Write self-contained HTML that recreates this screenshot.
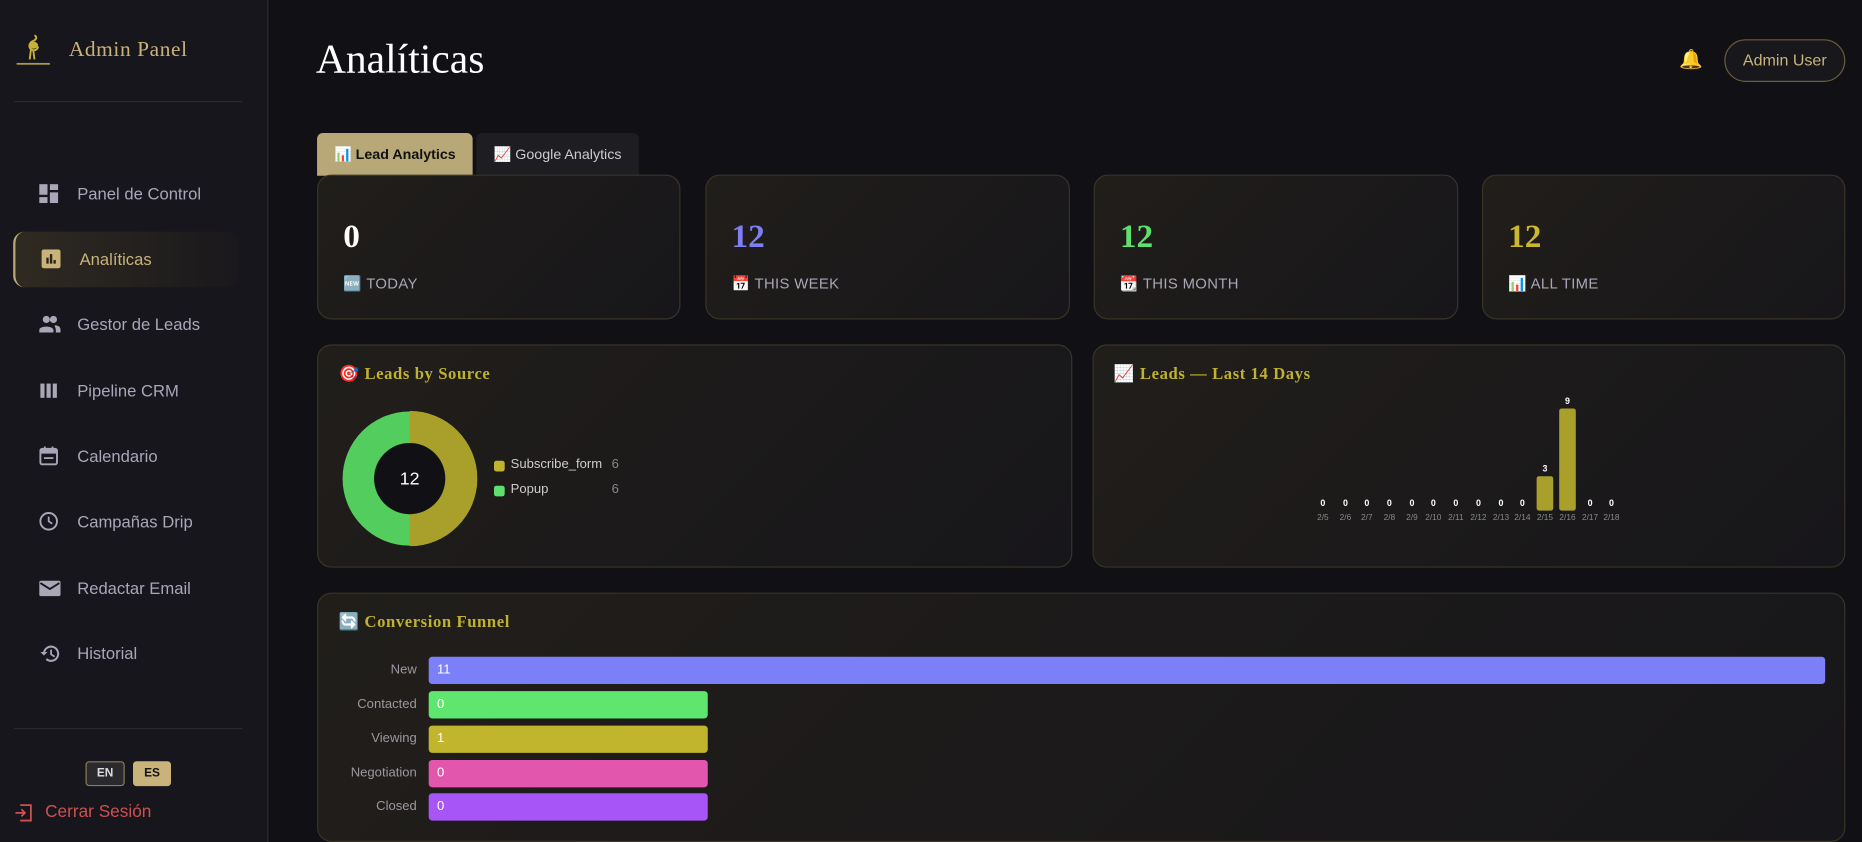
<!DOCTYPE html>
<html><head><meta charset="utf-8"><style>
*{box-sizing:border-box;margin:0;padding:0}
html,body{width:1862px;height:842px;overflow:hidden;background:#111015}
#w{position:absolute;left:0;top:0;width:1568px;height:709px;transform:scale(1.1875);transform-origin:0 0;font-family:"Liberation Sans",sans-serif;background:#111015}
.abs{position:absolute}
.side{left:0;top:0;width:226px;height:709px;background:#17161c;border-right:1px solid #2a2930}
.nav{position:absolute;left:33px;font-size:14px;color:#a9a6b8;height:20px;line-height:20px;width:190px}
.nav svg{position:absolute;left:0;top:2px}
.nav span{position:absolute;left:32px}
.card{position:absolute;border:1px solid #3a3427;border-radius:12px;background:linear-gradient(135deg,#211e1a,#17161a)}
.num{position:absolute;left:21px;top:36px;font-family:"Liberation Serif",serif;font-weight:bold;font-size:28px}
.lab{position:absolute;left:21px;top:84px;font-size:12.5px;color:#a9a6b8;letter-spacing:.3px}
.ttl{position:absolute;left:17px;top:16px;font-family:"Liberation Serif",serif;font-weight:bold;font-size:14px;color:#bfb230;letter-spacing:.5px}
.fl{position:absolute;right:1202px;font-size:11px;color:#9a98a0;width:80px;text-align:right}
.fb{position:absolute;left:93px;height:23px;border-radius:3px;color:#fff;font-size:11px;line-height:23px;padding-left:7px}
.bl{position:absolute;font-size:7px;color:#8a8890;width:20px;text-align:center}
.bv{position:absolute;font-size:7.5px;color:#fff;width:20px;text-align:center;font-weight:bold}
</style></head><body><div id="w">
<div class="abs side">
 <svg class="abs" style="left:12px;top:28px" width="32" height="28" viewBox="0 0 32 28"><path d="M17 2c2 0 2 3 0 4c-4 1-6 6-2 8c3 1 5-1 5-3M14 14l-1 8M16 14l1 8" stroke="#c8b33a" stroke-width="1.6" fill="none"/><ellipse cx="16" cy="10" rx="4" ry="3" fill="#c8b33a"/><rect x="2" y="25" width="28" height="1.5" fill="#a99a50"/></svg>
 <div class="abs" style="left:58px;top:31px;font-family:'Liberation Serif',serif;font-size:18px;color:#c9b37a;letter-spacing:.5px">Admin Panel</div>
 <div class="abs" style="left:12px;top:85px;width:192px;height:1px;background:#2a2930"></div>
 <div class="abs" style="left:11px;top:195px;width:190px;height:47px;border-radius:10px;border-left:2px solid #b9a877;background:linear-gradient(90deg,#2f2a21,#1a181c)"></div>
 <div class="nav" style="top:153px"><svg width="16" height="16"><rect x="0" y="0" width="7" height="9" fill="#a9a6b8"/><rect x="9" y="0" width="7" height="5" fill="#a9a6b8"/><rect x="0" y="11" width="7" height="5" fill="#a9a6b8"/><rect x="9" y="7" width="7" height="9" fill="#a9a6b8"/></svg><span>Panel de Control</span></div>
 <div class="nav" style="top:208px;left:35px;color:#c9b37a"><svg width="16" height="16"><rect width="16" height="16" rx="2" fill="#c9b37a"/><rect x="4" y="7" width="2" height="5" fill="#2a251c"/><rect x="7" y="4" width="2" height="8" fill="#2a251c"/><rect x="10" y="9" width="2" height="3" fill="#2a251c"/></svg><span>Analíticas</span></div>
 <div class="nav" style="top:263px"><svg width="18" height="16"><circle cx="6" cy="4" r="3" fill="#a9a6b8"/><circle cx="12" cy="4" r="3" fill="#a9a6b8"/><path d="M0 13c0-4 12-4 12 0v2H0zM13 9c3 0 5 1 5 4v2h-4v-2c0-2-1-3-1-4z" fill="#a9a6b8"/></svg><span>Gestor de Leads</span></div>
 <div class="nav" style="top:319px"><svg width="16" height="16"><rect x="1" y="2" width="3.5" height="12" fill="#a9a6b8"/><rect x="6.2" y="2" width="3.5" height="12" fill="#a9a6b8"/><rect x="11.4" y="2" width="3.5" height="12" fill="#a9a6b8"/></svg><span>Pipeline CRM</span></div>
 <div class="nav" style="top:374px"><svg width="16" height="16"><rect x="1" y="2" width="14" height="13" rx="1.5" fill="none" stroke="#a9a6b8" stroke-width="1.6"/><rect x="1" y="2" width="14" height="4" fill="#a9a6b8"/><rect x="4" y="0" width="1.5" height="3" fill="#a9a6b8"/><rect x="10.5" y="0" width="1.5" height="3" fill="#a9a6b8"/><rect x="4" y="9" width="8" height="1.5" fill="#a9a6b8"/></svg><span>Calendario</span></div>
 <div class="nav" style="top:429px"><svg width="16" height="16"><circle cx="8" cy="8" r="7" fill="none" stroke="#a9a6b8" stroke-width="1.6"/><path d="M8 4v4l3 2" stroke="#a9a6b8" stroke-width="1.5" fill="none"/></svg><span>Campañas Drip</span></div>
 <div class="nav" style="top:485px"><svg width="18" height="16"><rect x="0" y="2" width="18" height="13" rx="1.5" fill="#a9a6b8"/><path d="M1 4l8 5 8-5" stroke="#17161c" stroke-width="1.6" fill="none"/></svg><span>Redactar Email</span></div>
 <div class="nav" style="top:540px"><svg width="18" height="16"><path d="M4 8a6 6 0 1 1 2 5" stroke="#a9a6b8" stroke-width="1.7" fill="none"/><path d="M1 7h6l-3 3z" fill="#a9a6b8"/><path d="M10 5v4l3 2" stroke="#a9a6b8" stroke-width="1.5" fill="none"/></svg><span>Historial</span></div>
 <div class="abs" style="left:12px;top:613px;width:192px;height:1px;background:#2a2930"></div>
 <div class="abs" style="left:72px;top:641px;width:33px;height:21px;border:1px solid #8a7d55;border-radius:3px;background:#2a2a2e;color:#ddd;font-size:10px;font-weight:bold;text-align:center;line-height:19px">EN</div>
 <div class="abs" style="left:112px;top:641px;width:32px;height:21px;border-radius:3px;background:#c9b37a;color:#111;font-size:10px;font-weight:bold;text-align:center;line-height:21px">ES</div>
 <svg class="abs" style="left:12px;top:677px" width="16" height="15"><path d="M5 1h9v13H5M1 7.5h8M6 4.5l3 3-3 3" stroke="#d05050" stroke-width="1.5" fill="none"/></svg>
 <div class="abs" style="left:38px;top:676px;font-size:14.5px;color:#d05050">Cerrar Sesión</div>
</div>
<div class="abs" style="left:266px;top:30px;font-family:'Liberation Serif',serif;font-size:35px;color:#fff">Analíticas</div>
<div class="abs" style="left:1414px;top:40px;font-size:16px">🔔</div>
<div class="abs" style="left:1452px;top:33px;width:102px;height:36px;border:1px solid #6b5d3e;border-radius:18px;background:#18171c;color:#c9b37a;font-size:13.5px;text-align:center;line-height:34px">Admin User</div>
<div class="abs" style="left:267px;top:112px;width:131px;height:36px;background:#b9a877;border-radius:5px 5px 0 0;font-size:12px;font-weight:bold;color:#111;line-height:37px;text-align:center">📊 Lead Analytics</div>
<div class="abs" style="left:401px;top:112px;width:137px;height:36px;background:#1e1d22;border-radius:5px 5px 0 0;font-size:12px;color:#ccc;line-height:37px;text-align:center">📈 Google Analytics</div>
<div class="card" style="left:267px;top:147px;width:306px;height:122px"><div class="num" style="color:#fff">0</div><div class="lab">🆕 TODAY</div></div>
<div class="card" style="left:594px;top:147px;width:307px;height:122px"><div class="num" style="color:#7f7ff5">12</div><div class="lab">📅 THIS WEEK</div></div>
<div class="card" style="left:921px;top:147px;width:307px;height:122px"><div class="num" style="color:#5fe06e">12</div><div class="lab">📆 THIS MONTH</div></div>
<div class="card" style="left:1248px;top:147px;width:306px;height:122px"><div class="num" style="color:#c9b830">12</div><div class="lab">📊 ALL TIME</div></div>
<div class="card" style="left:267px;top:290px;width:636px;height:188px">
 <div class="ttl">🎯 Leads by Source</div>
 <svg class="abs" style="left:20px;top:55px" width="114" height="114"><circle cx="57" cy="57" r="43" fill="none" stroke="#52cd5e" stroke-width="27"/><path d="M57 0a57 57 0 0 1 0 114v-27a30 30 0 0 0 0-60z" fill="#a8a02a"/><circle cx="57" cy="57" r="30" fill="#111015"/><text x="57" y="62" text-anchor="middle" fill="#fff" font-size="15" font-family="Liberation Sans">12</text></svg>
 <div class="abs" style="left:148px;top:97px;width:9px;height:9px;border-radius:2px;background:#c0b330"></div>
 <div class="abs" style="left:162px;top:94px;font-size:11px;color:#ccc">Subscribe_form</div>
 <div class="abs" style="left:247px;top:94px;font-size:11px;color:#888">6</div>
 <div class="abs" style="left:148px;top:118px;width:9px;height:9px;border-radius:2px;background:#5fe06e"></div>
 <div class="abs" style="left:162px;top:115px;font-size:11px;color:#ccc">Popup</div>
 <div class="abs" style="left:247px;top:115px;font-size:11px;color:#888">6</div>
</div>
<div class="card" style="left:920px;top:290px;width:634px;height:188px">
 <div class="ttl">📈 Leads — Last 14 Days</div>
 <div class="abs" style="left:373px;top:110px;width:14px;height:29px;background:#a8a02a;border-radius:2px"></div>
 <div class="abs" style="left:392px;top:53px;width:14px;height:86px;background:#a8a02a;border-radius:2px"></div>
 <div class="bv" style="left:183px;top:128px">0</div><div class="bv" style="left:202px;top:128px">0</div><div class="bv" style="left:220px;top:128px">0</div><div class="bv" style="left:239px;top:128px">0</div><div class="bv" style="left:258px;top:128px">0</div><div class="bv" style="left:276px;top:128px">0</div><div class="bv" style="left:295px;top:128px">0</div><div class="bv" style="left:314px;top:128px">0</div><div class="bv" style="left:333px;top:128px">0</div><div class="bv" style="left:351px;top:128px">0</div><div class="bv" style="left:370px;top:99px">3</div><div class="bv" style="left:389px;top:42px">9</div><div class="bv" style="left:408px;top:128px">0</div><div class="bv" style="left:426px;top:128px">0</div>
 <div class="bl" style="left:183px;top:142px">2/5</div><div class="bl" style="left:202px;top:142px">2/6</div><div class="bl" style="left:220px;top:142px">2/7</div><div class="bl" style="left:239px;top:142px">2/8</div><div class="bl" style="left:258px;top:142px">2/9</div><div class="bl" style="left:276px;top:142px">2/10</div><div class="bl" style="left:295px;top:142px">2/11</div><div class="bl" style="left:314px;top:142px">2/12</div><div class="bl" style="left:333px;top:142px">2/13</div><div class="bl" style="left:351px;top:142px">2/14</div><div class="bl" style="left:370px;top:142px">2/15</div><div class="bl" style="left:389px;top:142px">2/16</div><div class="bl" style="left:408px;top:142px">2/17</div><div class="bl" style="left:426px;top:142px">2/18</div>
</div>
<div class="card" style="left:267px;top:499px;width:1287px;height:210px">
 <div class="ttl">🔄 Conversion Funnel</div>
 <div class="fl" style="top:58px">New</div><div class="fb" style="top:53px;width:1176px;background:#7b7ff8">11</div>
 <div class="fl" style="top:87px">Contacted</div><div class="fb" style="top:82px;width:235px;background:#5ee66e">0</div>
 <div class="fl" style="top:116px">Viewing</div><div class="fb" style="top:111px;width:235px;background:#c0b52c">1</div>
 <div class="fl" style="top:145px">Negotiation</div><div class="fb" style="top:140px;width:235px;background:#e256ad">0</div>
 <div class="fl" style="top:173px">Closed</div><div class="fb" style="top:168px;width:235px;background:#a855f7">0</div>
</div>
</div></body></html>
